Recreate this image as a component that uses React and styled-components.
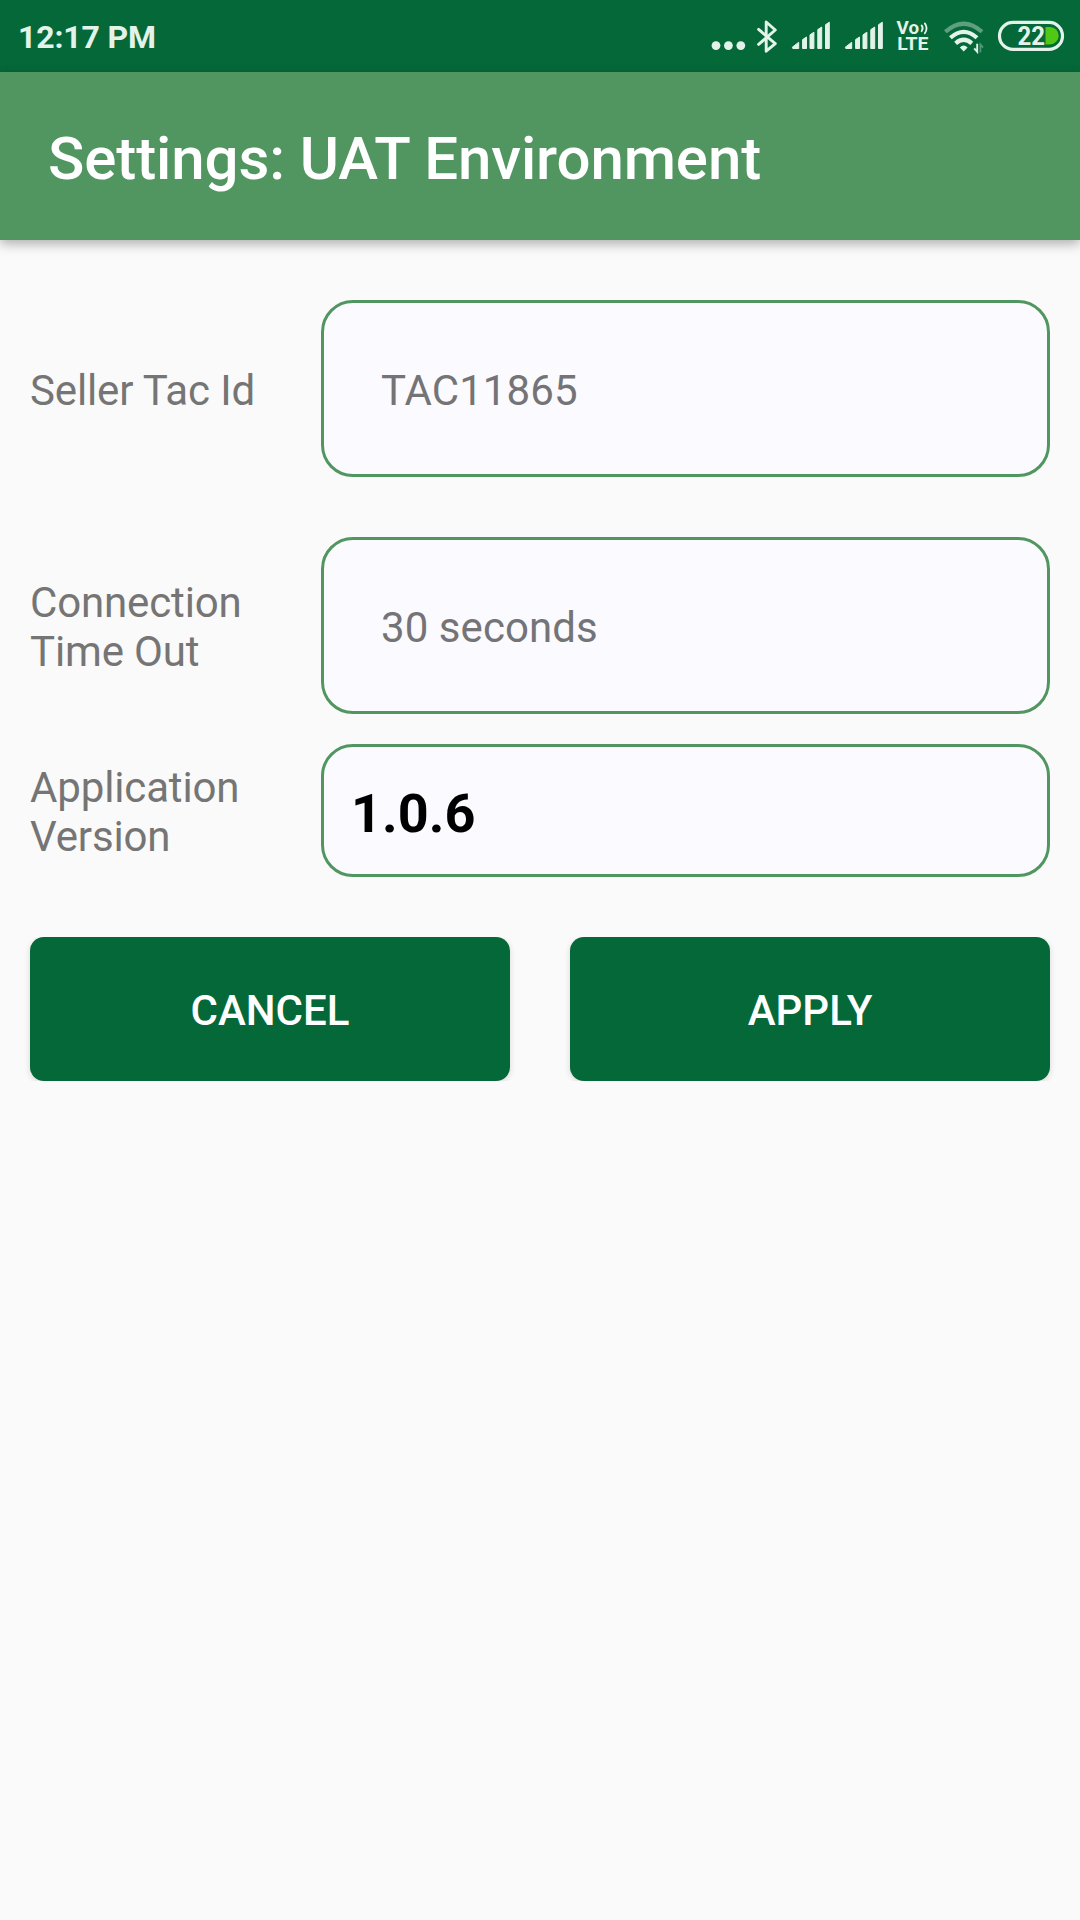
import React from 'react'
import styled, { createGlobalStyle } from 'styled-components'

const darkGreen = '#056839'
const lightGreen = '#519660'
const statusColor = '#e4f3ea'

const settings = [
  { label: 'Seller Tac Id', value: 'TAC11865', gap: 60 },
  { label: 'Connection Time Out', value: '30 seconds', gap: 60 },
  { label: 'Application Version', value: '1.0.6', gap: 30, compact: true }
]

const Dots = () => (
  <Icon width="32" viewBox="711 0 32 72" fill={statusColor}>
    <circle cx="716" cy="45.6" r="4.4" />
    <circle cx="728.4" cy="45.6" r="4.4" />
    <circle cx="740.8" cy="45.6" r="4.4" />
  </Icon>
)

const Bluetooth = () => (
  <Icon width="24" viewBox="755 0 24 72" fill="none" stroke={statusColor} strokeWidth="2.9" strokeLinecap="round" strokeLinejoin="round">
    <path d="M758.6 29.4 L775.3 43.6 L766.2 51.2 V22 L775.3 30 L758.6 44.4" />
  </Icon>
)

const Signal = () => (
  <Icon width="41" viewBox="791 0 41 72" fill={statusColor} stroke={statusColor} strokeWidth="1" strokeLinejoin="round">
    <path d="M792.3 47.2 L798.7 42.3 V48.5 H792.8 Z" />
    <path d="M802.6 39.6 L806.5 37 V48.5 H802.6 Z" />
    <path d="M810 34.8 L813.9 32.2 V48.5 H810 Z" />
    <path d="M817.8 29.6 L821.7 27 V48.5 H817.8 Z" />
    <path d="M825.5 24.7 L829.3 22.2 V48.5 H825.5 Z" />
  </Icon>
)

const Volte = () => (
  <Icon width="34" viewBox="897 0 34 72" fill={statusColor}>
    <VolteText x="896.6" y="33.5" textLength="22.5" lengthAdjust="spacingAndGlyphs">Vo</VolteText>
    <VolteText x="897.2" y="50" textLength="31.3" lengthAdjust="spacingAndGlyphs">LTE</VolteText>
    <g fill="none" stroke={statusColor} strokeWidth="1.8" strokeLinecap="round">
      <path d="M921.6 25.4 Q923.8 28.2 921.6 31.2" />
      <path d="M924.8 23.4 Q928.4 28.2 924.8 33.2" />
    </g>
  </Icon>
)

const Wifi = () => (
  <Icon width="42" viewBox="943 0 42 72" fill="none" stroke={statusColor} strokeWidth="4.2">
    <path d="M945.4 31.8 Q963.7 15.6 982 31.8" opacity=".4" />
    <path d="M950.4 37.8 Q963.7 26 977 37.8" />
    <path d="M955.6 43.3 Q963.7 36.2 971.8 43.3" />
    <path d="M959.8 47.4 Q963.7 43.4 967.6 47.4 L963.7 51.4 Z" fill={statusColor} stroke="none" />
    <path d="M977.2 43.8 V51.8 L974.2 48.4" strokeWidth="1.9" />
    <path d="M980.4 52.5 V44.4 L983 47.6" strokeWidth="1.7" opacity=".35" />
  </Icon>
)

const Battery = () => (
  <Icon width="68" viewBox="997 0 68 72">
    <rect x="999.5" y="22.4" width="63" height="27" rx="13.5" fill="none" stroke={statusColor} strokeWidth="3.2" />
    <path d="M1045.5 27 H1050 A8.7 8.7 0 0 1 1050 44.4 H1045.5 Z" fill="#50c814" />
    <BatteryText x="1017.6" y="45" textLength="27.5" lengthAdjust="spacingAndGlyphs">22</BatteryText>
  </Icon>
)

const App = () => (
  <Screen>
    <GlobalStyle />
    <StatusBar>
      <Clock>12:17 PM</Clock>
      <StatusIcons>
        <Dots />
        <Bluetooth />
        <Signal />
        <Signal />
        <Volte />
        <Wifi />
        <Battery />
      </StatusIcons>
    </StatusBar>
    <AppBar>
      <Title>Settings: UAT Environment</Title>
    </AppBar>
    <Form>
      {settings.map(({ label, value, gap, compact }) => (
        <Row key={label} $gap={gap}>
          <Label>{label}</Label>
          <Field $compact={compact}>{value}</Field>
        </Row>
      ))}
    </Form>
    <Actions>
      <Button>CANCEL</Button>
      <Button>APPLY</Button>
    </Actions>
  </Screen>
)

const GlobalStyle = createGlobalStyle`
  * {
    box-sizing: border-box;
  }
  body {
    margin: 0;
    background: #fafafa;
    font-family: Roboto, sans-serif;
  }
`

const Screen = styled.div`
  width: 1080px;
  min-height: 1920px;
  background: #fafafa;
`

const StatusBar = styled.div`
  display: flex;
  align-items: center;
  justify-content: space-between;
  height: 72px;
  padding: 0 15px 0 18px;
  background: ${darkGreen};
`

const Clock = styled.span`
  padding-top: 2px;
  color: ${statusColor};
  font-size: 32px;
  font-weight: 700;
  letter-spacing: -.15px;
  line-height: 38px;
`

const StatusIcons = styled.div`
  display: flex;
  gap: 12px;
`

const Icon = styled.svg`
  display: block;
  flex: none;
  height: 72px;
  overflow: visible;
`

const VolteText = styled.text`
  font-family: Roboto, sans-serif;
  font-size: 17.5px;
  font-weight: 700;
`

const BatteryText = styled.text`
  fill: ${statusColor};
  font-family: Roboto, sans-serif;
  font-size: 26px;
  font-weight: 700;
`

const AppBar = styled.header`
  display: flex;
  align-items: center;
  height: 168px;
  padding: 6px 48px 0;
  background: ${lightGreen};
  box-shadow: 0 4px 11px rgba(0, 0, 0, .3);
`

const Title = styled.h1`
  margin: 0;
  color: #fff;
  font-size: 60px;
  font-weight: 500;
  letter-spacing: -.1px;
  line-height: 70px;
`

const Form = styled.div`
  padding: 0 30px;
`

const Row = styled.div`
  display: grid;
  grid-template-columns: 291px 1fr;
  align-items: center;
  margin-top: ${({ $gap }) => $gap}px;
`

const Label = styled.label`
  width: 240px;
  padding-top: 3px;
  color: #757575;
  font-size: 42px;
  letter-spacing: -.14px;
  line-height: 49px;
`

const Field = styled.div`
  display: flex;
  align-items: center;
  height: ${({ $compact }) => $compact ? 133 : 177}px;
  padding: ${({ $compact }) => $compact ? '5px 27px 0' : '3px 57px 0'};
  border: 3px solid ${lightGreen};
  border-radius: 32px;
  background: #fbfaff;
  color: ${({ $compact }) => $compact ? '#000' : '#747476'};
  font-size: ${({ $compact }) => $compact ? 54 : 42}px;
  font-weight: ${({ $compact }) => $compact ? 700 : 400};
  letter-spacing: .08px;
`

const Actions = styled.div`
  display: grid;
  grid-template-columns: 1fr 1fr;
  gap: 60px;
  height: 144px;
  margin-top: 60px;
  padding: 0 30px;
  overflow: hidden;
`

const Button = styled.button`
  padding: 3px 0 0;
  border: 0;
  border-radius: 14px;
  background: ${darkGreen};
  box-shadow: 0 2px 6px rgba(0, 0, 0, .14);
  color: #fff;
  font-family: inherit;
  font-size: 42px;
  font-weight: 500;
`

export default App
